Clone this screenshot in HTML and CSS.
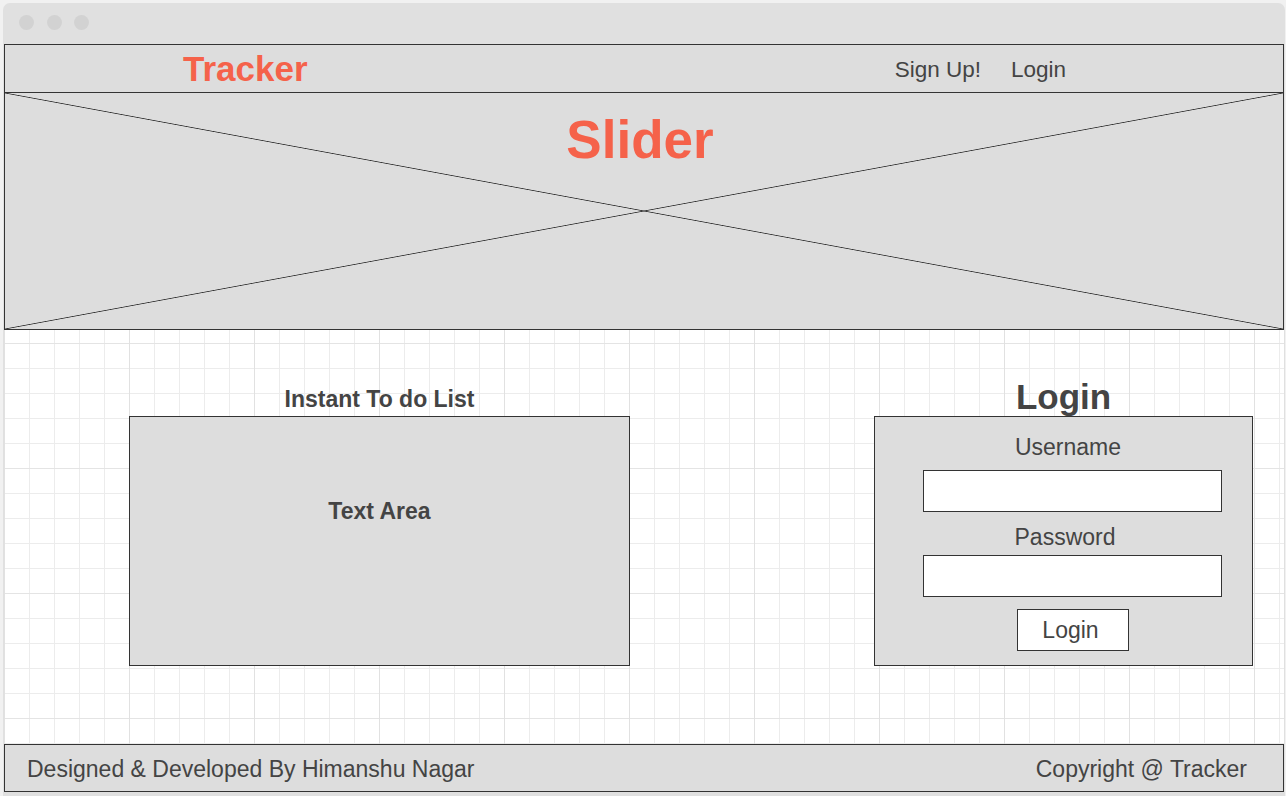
FILE: index.html
```html
<!DOCTYPE html>
<html lang="en">
<head>
<meta charset="utf-8">
<title>Tracker</title>
<link rel="stylesheet" href="styles.css">
</head>
<body>
<div class="window">
  <div class="titlebar">
    <span class="dot"></span><span class="dot"></span><span class="dot"></span>
  </div>
  <header class="header">
    <div class="brand">Tracker</div>
    <nav class="nav">
      <a class="nav-link">Sign Up!</a>
      <a class="nav-link">Login</a>
    </nav>
  </header>
  <section class="slider">
    <div class="slider-title">Slider</div>
  </section>
  <main class="main">
    <div class="todo-col">
      <h2 class="todo-title">Instant To do List</h2>
      <div class="text-area">Text Area</div>
    </div>
    <div class="login-col">
      <h2 class="login-title">Login</h2>
      <form class="login-box">
        <label class="field-label label-user">Username</label>
        <input class="field-input input-user" type="text">
        <label class="field-label label-pass">Password</label>
        <input class="field-input input-pass" type="password">
        <button class="login-btn" type="button">Login</button>
      </form>
    </div>
  </main>
  <footer class="footer">
    <span>Designed &amp; Developed By Himanshu Nagar</span>
    <span>Copyright @ Tracker</span>
  </footer>
</div>
</body>
</html>
```
FILE: styles.css
```css
html, body {
  margin: 0;
}
body {
  background: #f1f1f1;
  padding: 3px 1px 0 3px;
  height: 796px;
  box-sizing: border-box;
  overflow: hidden;
  font-family: "Liberation Sans", Arial, sans-serif;
  color: #444;
}
.window {
  width: 1282px;
  height: 793px;
  background: #e0e0e0;
  border-radius: 7px 7px 0 0;
  padding: 0 1px;
  box-sizing: border-box;
  display: flex;
  flex-direction: column;
}
.titlebar {
  height: 41px;
  flex: none;
  display: flex;
  align-items: flex-start;
  gap: 12.5px;
  padding: 12px 0 0 15px;
  box-sizing: border-box;
}
.dot {
  width: 15px;
  height: 15px;
  border-radius: 50%;
  background: #d2d2d2;
}
.header {
  height: 49px;
  flex: none;
  box-sizing: border-box;
  border: 1px solid #333;
  background: #dddddd;
  display: flex;
  align-items: center;
  padding: 0 217px 0 178px;
}
.brand {
  font-size: 35px;
  font-weight: bold;
  color: #f5624a;
}
.nav {
  margin-left: auto;
  margin-top: 3px;
  display: flex;
  gap: 30px;
}
.nav-link {
  font-size: 22.5px;
  color: #444;
}
.slider {
  height: 237px;
  flex: none;
  box-sizing: border-box;
  border: 1px solid #333;
  border-top: none;
  background-color: #dddddd;
  background-image:
    linear-gradient(to top right, transparent calc(50% - 0.8px), #333 50%, transparent calc(50% + 0.8px)),
    linear-gradient(to bottom right, transparent calc(50% - 0.8px), #333 50%, transparent calc(50% + 0.8px));
  padding: 16px 8px 0 0;
  text-align: center;
}
.slider-title {
  font-size: 53px;
  font-weight: bold;
  color: #f5624a;
  line-height: normal;
}
.main {
  height: 414px;
  flex: none;
  box-sizing: border-box;
  background-color: #fff;
  background-image:
    linear-gradient(to right, #e1e1e1 1px, transparent 1px),
    linear-gradient(to bottom, #e4e4e4 1px, transparent 1px),
    linear-gradient(to right, #ececec 1px, transparent 1px),
    linear-gradient(to bottom, #ececec 1px, transparent 1px);
  background-size: 125px 125px, 125px 125px, 25px 25px, 25px 25px;
  background-position: 0 0, 0 13px, 0 0, 0 13px;
  display: flex;
  justify-content: space-between;
  align-items: flex-end;
  padding: 0 31px 78px 125px;
}
.todo-col {
  width: 501px;
  display: flex;
  flex-direction: column;
}
.todo-title {
  margin: 0 0 4px;
  font-size: 23px;
  line-height: 26px;
  font-weight: bold;
  text-align: center;
  color: #444;
}
.text-area {
  height: 250px;
  box-sizing: border-box;
  border: 1px solid #333;
  background: #dddddd;
  padding-top: 81px;
  font-size: 23px;
  line-height: 26px;
  font-weight: bold;
  text-align: center;
}
.login-col {
  width: 379px;
  display: flex;
  flex-direction: column;
}
.login-title {
  margin: 0;
  font-size: 35px;
  line-height: 38px;
  font-weight: bold;
  text-align: center;
  color: #444;
}
.login-box {
  margin: 0;
  height: 250px;
  box-sizing: border-box;
  border: 1px solid #333;
  background: #dddddd;
  padding: 17px 30px 0 48px;
  display: flex;
  flex-direction: column;
}
.field-label {
  font-size: 23px;
  line-height: 26px;
  text-align: center;
  padding-right: 9px;
}
.label-pass {
  margin-top: 12px;
  padding-right: 15px;
}
.field-input {
  display: block;
  width: 100%;
  height: 42px;
  box-sizing: border-box;
  border: 1px solid #333;
  background: #fff;
  margin: 10px 0 0;
  padding: 0;
  outline: none;
  border-radius: 0;
}
.input-pass {
  margin-top: 5px;
}
.login-btn {
  align-self: center;
  margin-top: 12px;
  width: 112px;
  height: 42px;
  box-sizing: border-box;
  border: 1px solid #333;
  background: #fff;
  border-radius: 0;
  font-family: "Liberation Sans", Arial, sans-serif;
  font-size: 23px;
  color: #444;
  padding: 0 4px 0 0;
}
.footer {
  height: 48px;
  flex: none;
  box-sizing: border-box;
  border: 1px solid #333;
  background: #dddddd;
  display: flex;
  justify-content: space-between;
  align-items: center;
  padding: 3px 36px 0 22px;
  font-size: 23px;
}
```
